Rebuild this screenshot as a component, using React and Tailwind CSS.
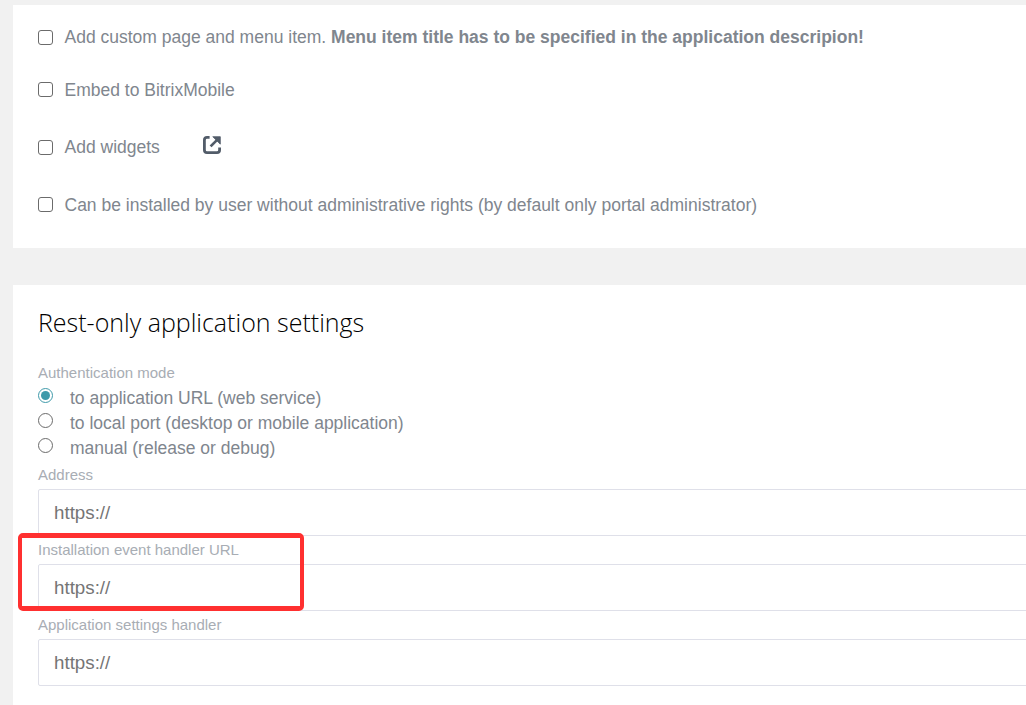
const permissions = [
  { row: "h-[53px]", label: "Add custom page and menu item.", strong: "Menu item title has to be specified in the application descripion!" },
  { row: "h-[52px]", label: "Embed to BitrixMobile" },
  { row: "h-[63px]", label: "Add widgets", link: true },
  { row: "h-[52px]", label: "Can be installed by user without administrative rights (by default only portal administrator)" },
];

const modes = [
  "to application URL (web service)",
  "to local port (desktop or mobile application)",
  "manual (release or debug)",
];

function Checkbox() {
  return <input type="checkbox" className="mr-[11.5px] mb-[1px] h-[15px] w-[15px] shrink-0 appearance-none rounded-[3px] border border-[#6b6b6b] bg-white" />;
}

function OpenIcon() {
  return (
    <svg width="18" height="18" viewBox="0 0 18 18" fill="none" className="mb-[5px] ml-[43px]">
      <path d="M6.6 1.4H4Q1.4 1.4 1.4 4V14Q1.4 16.6 4 16.6H14Q16.6 16.6 16.6 14V11.6" stroke="#525c69" strokeWidth="2.8" />
      <path d="M7.6 10.4L14.4 3.6" stroke="#525c69" strokeWidth="2.7" />
      <path d="M9.8 0.7H17.3V8.2Z" fill="#525c69" stroke="#525c69" strokeWidth="0.8" strokeLinejoin="round" />
    </svg>
  );
}

function Radio({ label, checked }) {
  return (
    <label className="flex h-[25px] items-start">
      <span className={checked
        ? "mt-[2px] flex h-[15px] w-[15px] items-center justify-center rounded-full border border-[#3f9aaa] bg-white"
        : "mt-[2px] h-[15px] w-[15px] rounded-full border border-[#6b6b6b] bg-white"}>
        {checked && <span className="h-[9px] w-[9px] rounded-full bg-[#3f9aaa]" />}
      </span>
      <span className="ml-[17px] text-[17.5px] leading-[25px]">{label}</span>
    </label>
  );
}

function Field({ label }) {
  return (
    <div className="h-[75px]">
      <div className="h-[29px] text-[15px] leading-[29px] text-[#a8adb4]">{label}</div>
      <input placeholder="https://" className="block h-[47px] w-full rounded-[2px] border border-[#dfe0e9] bg-white px-[15px] text-[18.75px] text-[#757575] placeholder:text-[#757575]" />
    </div>
  );
}

export default function App() {
  return (
    <div className="relative h-[705px] w-[1026px] overflow-hidden bg-[#f1f1f1] pt-[5px] pl-[13px] font-['Liberation_Sans',Arial,sans-serif] text-[#80868e]">
      <section className="h-[243px] bg-white pt-[6px] pl-[25px]">
        {permissions.map((p) => (
          <label key={p.label} className={`flex items-center text-[17.5px] whitespace-nowrap ${p.row}`}>
            <Checkbox />
            <span>
              {p.label}
              {p.strong && <b> {p.strong}</b>}
            </span>
            {p.link && <OpenIcon />}
          </label>
        ))}
      </section>
      <section className="mt-[37px] h-[420px] bg-white pt-[17px] pl-[25px]">
        <h1 className="h-[40px] font-['Open_Sans',sans-serif] text-[25px] leading-[40px] font-light text-black">Rest-only application settings</h1>
        <div className="mt-[16px] h-[29px] text-[15px] leading-[29px] text-[#a8adb4]">Authentication mode</div>
        <div className="-mt-[1px]">
          {modes.map((m, i) => (
            <Radio key={m} label={m} checked={i === 0} />
          ))}
        </div>
        <div className="-mr-[10px] -mt-[1px]">
          <Field label="Address" />
          <Field label="Installation event handler URL" />
          <Field label="Application settings handler" />
        </div>
      </section>
      <div className="absolute top-[533px] left-[18px] h-[78px] w-[286px] rounded-[5px] border-x-4 border-y-[5px] border-[#ff3030]" />
    </div>
  );
}
